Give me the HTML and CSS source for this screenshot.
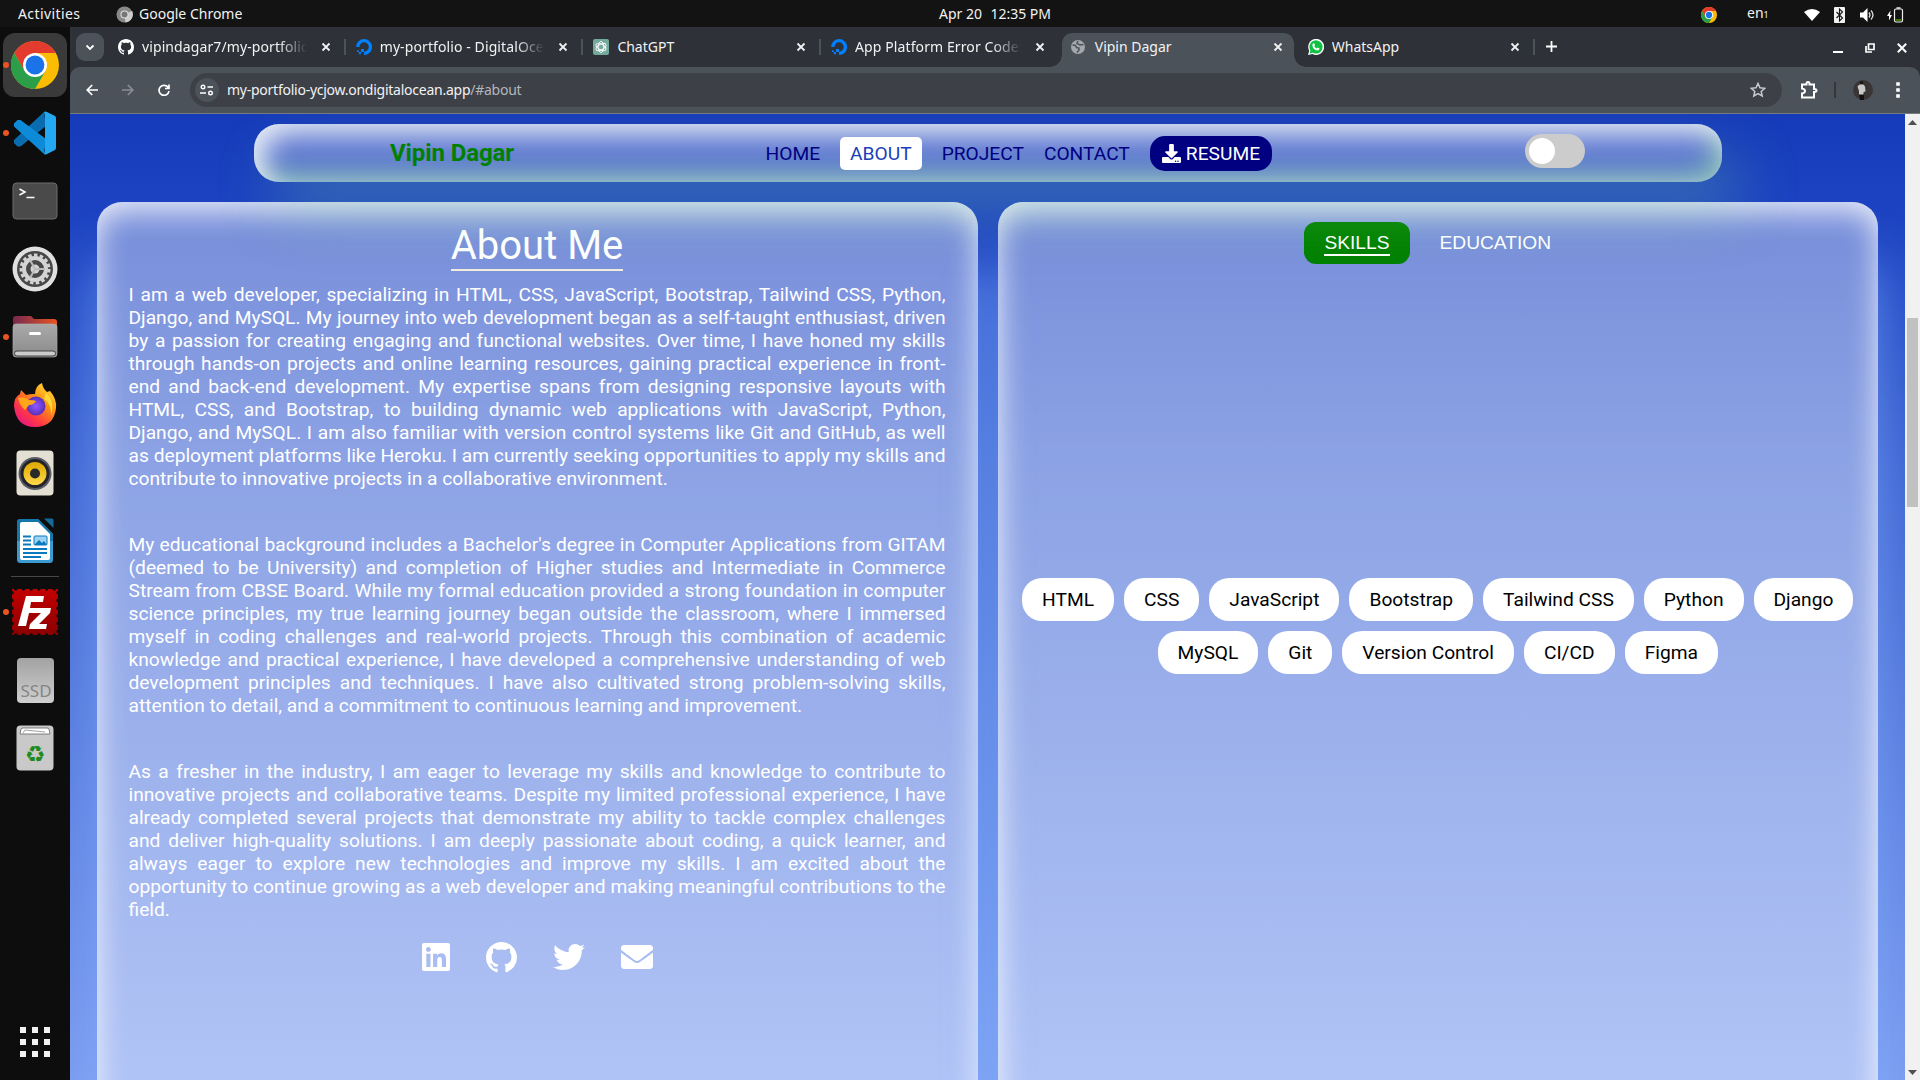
FILE: index.html
```html
<!DOCTYPE html>
<html lang="en">
<head>
<meta charset="utf-8">
<title>Vipin Dagar</title>
<link rel="stylesheet" href="styles.css">
</head>
<body>
<svg class="defs" width="0" height="0">
  <defs>
    <linearGradient id="files" x1="0" x2="1"><stop offset="0" stop-color="#77284f"/><stop offset="1" stop-color="#e95420"/></linearGradient>
    <linearGradient id="greyDown" x1="0" x2="0" y1="0" y2="1"><stop offset="0" stop-color="#a9a9a9"/><stop offset="1" stop-color="#8a8a8a"/></linearGradient>
    <linearGradient id="fox" x1="1" x2="0.2" y1="0" y2="1"><stop offset="0" stop-color="#fff44f"/><stop offset=".4" stop-color="#ff980e"/><stop offset=".75" stop-color="#ff3647"/><stop offset="1" stop-color="#e31587"/></linearGradient>
    <radialGradient id="globe"><stop offset="0" stop-color="#9059ff"/><stop offset="1" stop-color="#5b2fb8"/></radialGradient>
    <linearGradient id="fz" x1="0" x2="0" y1="0" y2="1"><stop offset="0" stop-color="#c40000"/><stop offset="1" stop-color="#8b0000"/></linearGradient>
    <linearGradient id="cone" x1="0" x2="0" y1="0" y2="1"><stop offset="0" stop-color="#e0a800"/><stop offset="1" stop-color="#ffd94a"/></linearGradient>
    <symbol id="chrome" viewBox="0 0 48 48">
      <circle cx="24" cy="24" r="24" fill="#fbbc04"/>
      <path d="M3.200 12A24 24 0 0 1 44.800 12H24v12z" fill="#e33b2e"/>
      <path d="M3.200 12 13.600 30 24 24V12z" fill="#e33b2e"/>
      <path d="M3.200 12A24 24 0 0 0 24 48L34.400 30 13.600 30z" fill="#2a9e48"/>
      <circle cx="24" cy="24" r="12" fill="#fff"/><circle cx="24" cy="24" r="9.400" fill="#1a73e8"/>
    </symbol>
    <symbol id="github" viewBox="0 0 16 16"><path d="M8 0C3.58 0 0 3.58 0 8c0 3.54 2.29 6.53 5.47 7.59.4.07.55-.17.55-.38 0-.19-.01-.82-.01-1.49-2.01.37-2.53-.49-2.69-.94-.09-.23-.48-.94-.82-1.13-.28-.15-.68-.52-.01-.53.63-.01 1.08.58 1.23.82.72 1.21 1.87.87 2.33.66.07-.52.28-.87.51-1.07-1.78-.2-3.64-.89-3.64-3.95 0-.87.31-1.59.82-2.15-.08-.2-.36-1.02.08-2.12 0 0 .67-.21 2.2.82.64-.18 1.32-.27 2-.27.68 0 1.36.09 2 .27 1.53-1.04 2.2-.82 2.2-.82.44 1.1.16 1.92.08 2.12.51.56.82 1.27.82 2.15 0 3.07-1.87 3.75-3.65 3.95.29.25.54.73.54 1.48 0 1.07-.01 1.93-.01 2.2 0 .21.15.46.55.38A8.013 8.013 0 0016 8c0-4.42-3.58-8-8-8z" fill="#fff"/></symbol>
    <symbol id="ocean" viewBox="0 0 16 16"><path d="M8 14.3A6.3 6.3 0 1 0 1.8 8" fill="none" stroke="#0080ff" stroke-width="3.3"/><path d="M5 10h3v3H5zM2.8 13H5v2.2H2.8zM1 11.2h1.8V13H1z" fill="#0080ff"/></symbol>
    <symbol id="close" viewBox="0 0 10 10"><path d="M1.5 1.5l7 7M8.5 1.5l-7 7" stroke="#f1f1f1" stroke-width="1.8"/></symbol>
  </defs>
</svg>

<header class="topbar">
  <div class="topbar-left"><span class="activities">Activities</span>
    <svg class="app-icon" viewBox="0 0 18 18"><circle cx="9" cy="9" r="8.5" fill="#888"/><path d="M9 9l8-4a8.5 8.5 0 0 1-7 12.4z" fill="#ccc"/><circle cx="9" cy="9" r="4.3" fill="#ddd"/><circle cx="9" cy="9" r="3.2" fill="#777"/></svg>
    <span class="app-name">Google Chrome</span></div>
  <div class="clock"><span>Apr 20</span><span>12:35 PM</span></div>
  <div class="tray">
    <svg class="t-chrome"><use href="#chrome"/></svg>
    <span class="lang">en<small>1</small></span>
    <svg class="t-wifi" viewBox="0 0 16 12"><path d="M0 3Q8-3 16 3L8 12z" fill="#fff"/></svg>
    <svg class="t-bt" viewBox="0 0 11 16"><rect width="11" height="16" rx="1" fill="#f2f2f2"/><path d="M2.5 5l6 6-3 3V2l3 3-6 6" fill="none" stroke="#131313" stroke-width="1.1"/></svg>
    <svg class="t-vol" viewBox="0 0 16 14"><path d="M0 4.5h3L7.500 0v14L3 9.500H0z" fill="#fff"/><path d="M9 4.500q2 2.500 0 5M11 2.500q4 4.500 0 9" fill="none" stroke="#ddd" stroke-width="1.300"/></svg>
    <svg class="t-bat" viewBox="0 0 17 16"><path d="M3.500 3.500L0 9h2v4.500L5 8H3z" fill="#fff"/><rect x="7.500" y="2" width="8" height="13" rx="1.500" fill="none" stroke="#eee" stroke-width="1.200"/><path d="M9.500 1h4" stroke="#eee" stroke-width="1.500"/><path d="M8.500 13h6" stroke="#4e9a06" stroke-width="1.500"/></svg>
  </div>
</header>

<div class="desktop">
  <aside class="dock">
    <div class="dock-item running focused"><svg width="48" height="48"><use href="#chrome"/></svg></div>
    <div class="dock-item running"><svg width="44" height="44" viewBox="0 0 44 44"><path d="M31 1 1 29l0 3 3.500 3.500h3L33 15z" fill="#0a6cb0"/><path d="M31 43 1 15.500v-3L4.500 9h3L33 28z" fill="#0d8bd8"/><path d="M31 1q1-1 3 0l8 4q1 1 1 2v30q0 1-1 2l-8 4q-2 1-3 0l1-4V5z" fill="#24a8f2"/></svg></div>
    <div class="dock-item"><svg width="46" height="38" viewBox="0 0 46 38"><rect x="1" y="1" width="44" height="36" rx="3.500" fill="#4a4a4a" stroke="#6c6c6c"/><path d="M7.500 7l5.500 3-5.500 3M14.500 15.500h8" fill="none" stroke="#fff" stroke-width="1.500"/></svg></div>
    <div class="dock-item"><svg width="46" height="46" viewBox="0 0 46 46"><circle cx="23" cy="23" r="22.500" fill="#e0e0e0"/><circle cx="23" cy="23" r="18" fill="#484848"/><circle cx="23" cy="23" r="14" fill="none" stroke="#d4d4d4" stroke-width="3" stroke-dasharray="3.500 2.363"/><circle cx="23" cy="23" r="11" fill="none" stroke="#d4d4d4" stroke-width="4"/><circle cx="23" cy="23" r="4.500" fill="#d4d4d4"/><path d="M23 23h10M23 23l-5-9M23 23l-5 9" stroke="#bbb" stroke-width="2"/></svg></div>
    <div class="dock-item running"><svg width="46" height="44" viewBox="0 0 46 44"><path d="M1 20V4q0-3 3-3h15l3 3h20q3 0 3 3v14z" fill="url(#files)"/><rect x="1" y="9" width="44" height="33" rx="3" fill="url(#greyDown)" stroke="#aaa" stroke-width=".7"/><rect x="2.500" y="36" width="41" height="5" rx="2.500" fill="#ccc" stroke="#444"/><rect x="17" y="17" width="12" height="3" rx="1.500" fill="#fff"/></svg></div>
    <div class="dock-item"><svg width="44" height="46" viewBox="0 0 44 46"><path d="M1 24q0-9 6-12l1-4 5 5q3-1 9-1Q22 4 29 1q1 6 5 9l3-1q7 8 6 17-2 19-21 19T1 24z" fill="url(#fox)"/><circle cx="23" cy="24" r="9.500" fill="url(#globe)"/><path d="M5 16q7-2 11 2 5 0 7 1-2 4-7 4l-4 5q-5-4-7-12z" fill="#ffa51a"/><path d="M33 11q9 8 5 23 1-12-7-17z" fill="#ffd83a"/></svg></div>
    <div class="dock-item"><svg width="38" height="46" viewBox="0 0 38 46"><rect x=".5" y=".5" width="37" height="45" rx="4" fill="#e4dfd3"/><circle cx="19" cy="23.500" r="16.500" fill="#5a5c66"/><circle cx="19" cy="23.500" r="14.500" fill="#22232b"/><circle cx="19" cy="23.500" r="11.500" fill="url(#cone)"/><circle cx="19" cy="23.500" r="5" fill="#2a2a2a"/></svg></div>
    <div class="dock-item"><svg width="38" height="46" viewBox="0 0 38 46"><path d="M4.500 1H22l15 15v25.500q0 3.500-3.500 3.500h-29Q1 45 1 41.500v-37Q1 1 4.500 1z" fill="#3a9bd0"/><path d="M1 23V4.500Q1 1 4.500 1H22l15 15v7z" fill="#1477ac"/><path d="M6 4h16l12 12v24q0 2-2 2H6q-2 0-2-2V6q0-2 2-2z" fill="#fff"/><path d="M28 .5h8q1.500 0 1.500 1.500v8z" fill="#136a9b"/><path d="M7 18.500h8M7 22.500h8M7 26.500h8M7 31h24M7 35h24M7 39h18" stroke="#0a7abf" stroke-width="2"/><rect x="18" y="18" width="13" height="9" rx="1" fill="#9fd3f2" stroke="#0a7abf"/><path d="M18 27l5-5 3 3 2-2 3 4z" fill="#0a7abf"/></svg></div>
    <hr class="dock-sep">
    <div class="dock-item running"><svg width="48" height="48" viewBox="0 0 48 48"><rect x="1" y="1" width="46" height="46" fill="url(#fz)"/><rect x="1" y="1" width="46" height="46" fill="none" stroke="#0d0d0d" stroke-width="3.500" stroke-dasharray="0 7.667" stroke-linecap="round" stroke-dashoffset="-3.800"/><path d="M15 8h18l-1 6H20l-1 6h21l-1 5-11 11h8l-1 5H18l1-5 11-11H18l-3 13H7z" fill="#fff"/></svg></div>
    <div class="dock-item"><div class="ssd">SSD</div></div>
    <div class="dock-item"><svg width="38" height="46" viewBox="0 0 38 46"><rect x=".5" y=".5" width="37" height="45" rx="4" fill="#c9c9c9"/><path d="M4 9l1-5q1-1 2-1h24q1 0 2 1l1 5z" fill="#fff" stroke="#666" stroke-width=".8"/><path d="M7 8l2-3 20 2" fill="none" stroke="#888" stroke-width=".8"/><text x="19" y="37" text-anchor="middle" class="recycle">♻</text></svg></div>
    <svg class="apps" width="30" height="30" viewBox="0 0 30 30"><path d="M0 0h6v6H0zM12 0h6v6h-6zM24 0h6v6h-6zM0 12h6v6H0zM12 12h6v6h-6zM24 12h6v6h-6zM0 24h6v6H0zM12 24h6v6h-6zM24 24h6v6h-6z" fill="#f2f2f2"/></svg>
  </aside>

  <main class="browser">
    <div class="tabstrip">
      <div class="tab-search"><svg width="10" height="7" viewBox="0 0 10 7"><path d="M1.500 1.500L5 5l3.500-3.500" fill="none" stroke="#fff" stroke-width="1.800"/></svg></div>
      <div class="tab"><svg class="fav"><use href="#github"/></svg><span class="title fade">vipindagar7/my-portfolio</span><svg class="x"><use href="#close"/></svg></div>
      <div class="tab"><svg class="fav"><use href="#ocean"/></svg><span class="title fade">my-portfolio - DigitalOcean</span><svg class="x"><use href="#close"/></svg></div>
      <div class="tab"><svg class="fav" viewBox="0 0 16 16"><rect width="16" height="16" rx="2" fill="#74aa9c"/><g fill="none" stroke="#fff" stroke-width=".9"><ellipse cx="8" cy="8" rx="2.800" ry="5.500"/><ellipse cx="8" cy="8" rx="2.800" ry="5.500" transform="rotate(60 8 8)"/><ellipse cx="8" cy="8" rx="2.800" ry="5.500" transform="rotate(120 8 8)"/></g></svg><span class="title">ChatGPT</span><svg class="x"><use href="#close"/></svg></div>
      <div class="tab before-active"><svg class="fav"><use href="#ocean"/></svg><span class="title fade">App Platform Error Codes</span><svg class="x"><use href="#close"/></svg></div>
      <div class="tab active"><svg class="fav" viewBox="0 0 16 16"><circle cx="8" cy="8" r="7" fill="#a3a8ae"/><path d="M2.500 6l3 .5 1 2 2.500.5v2l-2 2.500M8 2l-1 2.500 3 1.500 3.500-.5" fill="none" stroke="#4b525a" stroke-width="1.500"/></svg><span class="title">Vipin Dagar</span><svg class="x"><use href="#close"/></svg></div>
      <div class="tab"><svg class="fav" viewBox="0 0 16 16"><path d="M0 16l1.200-4.200A8 8 0 1 1 4.500 15z" fill="#fff"/><path d="M1.600 14.500l.8-3A6.600 6.600 0 1 1 4.700 13.700z" fill="#12c143"/><path d="M5 4.500l1.200-.2.8 2-.7.9q.8 1.600 2.400 2.300l.9-.9 2 1q-.2 2-2.200 2-4.700-1-5-5.400 0-1 .6-1.700z" fill="#fff"/></svg><span class="title">WhatsApp</span><svg class="x"><use href="#close"/></svg></div>
      <svg class="newtab" viewBox="0 0 11 11"><path d="M5.500 0v11M0 5.500h11" stroke="#fff" stroke-width="1.800"/></svg>
      <div class="win">
        <svg width="10" height="12" viewBox="0 0 10 12"><path d="M0 10h10" stroke="#fff" stroke-width="2"/></svg>
        <svg width="10" height="10" viewBox="0 0 10 10"><path d="M3.500 1h5.500v5.500H3.500zM1 3v6h6" fill="none" stroke="#fff" stroke-width="1.700"/></svg>
        <svg width="10" height="10" viewBox="0 0 10 10"><path d="M.8.8l8.400 8.400M9.200.8L.8 9.200" stroke="#fff" stroke-width="2"/></svg>
      </div>
    </div>
    <div class="toolbar">
      <svg class="tb" viewBox="0 0 12 12"><path d="M12 6H1.200M6.200 1L1.200 6l5 5" fill="none" stroke="#fff" stroke-width="1.700"/></svg>
      <svg class="tb" viewBox="0 0 12 12"><path d="M0 6h10.800M5.800 1l5 5-5 5" fill="none" stroke="#898e94" stroke-width="1.700"/></svg>
      <svg class="tb" viewBox="0 0 12 12"><path d="M10.300 3.700A5 5 0 1 0 11 7M11 .5v4H7" fill="none" stroke="#fff" stroke-width="1.700"/></svg>
      <div class="omnibox">
        <span class="site"><svg width="14" height="12" viewBox="0 0 14 12"><path d="M7.500 3H13M0 9h6" stroke="#fff" stroke-width="1.600"/><circle cx="3" cy="3" r="1.800" fill="none" stroke="#fff" stroke-width="1.400"/><circle cx="10.500" cy="9" r="1.800" fill="none" stroke="#fff" stroke-width="1.400"/></svg></span>
        <span class="url">my-portfolio-ycjow.ondigitalocean.app<i>/#about</i></span>
        <svg class="star" width="16" height="16" viewBox="0 0 16 16"><path d="M8 1.500l2 4.300 4.700.5-3.500 3.100 1 4.600L8 11.600 3.800 14l1-4.600L1.300 6.300 6 5.800z" fill="none" stroke="#c8cacd" stroke-width="1.500"/></svg>
      </div>
      <svg width="18" height="18" viewBox="0 0 18 18"><path d="M2 3.500h4.500q-.2-2.500 1.500-2.500t1.500 2.500H14V8q2.500-.2 2.500 1.500T14 11v5.500H2v-4q3-.4 3-2.500T2 7.500z" fill="none" stroke="#fff" stroke-width="2"/></svg>
      <i class="tb-sep"></i>
      <svg class="avatar" viewBox="0 0 20 20"><circle cx="10" cy="10" r="10" fill="#3b3635"/><path d="M4.500 6.500Q6 4 8.500 4t3.500 2.500l.5 5-2 .5v3H6v-4z" fill="#c9c9ca"/><circle cx="8.500" cy="2.800" r="1.800" fill="#1c1614"/><path d="M6 14.500h5V20H7z" fill="#111"/></svg>
      <svg width="4" height="18" viewBox="0 0 4 18"><path d="M.2 1.200h3.600v3.600H.2zM.2 7.200h3.600v3.600H.2zM.2 13.200h3.600v3.600H.2z" fill="#fff"/></svg>
    </div>

    <div class="viewport">
      <div class="page">
        <nav class="navbar">
          <a class="brand">Vipin Dagar</a>
          <div class="links"><a>HOME</a><a class="current">ABOUT</a><a>PROJECT</a><a>CONTACT</a>
            <a class="resume"><svg width="19" height="19" viewBox="0 0 512 512"><path fill="#fff" d="M216 0h80c13.300 0 24 10.700 24 24v168h87.700c17.800 0 26.700 21.500 14.100 34.100L269.700 378.300c-7.500 7.500-19.800 7.500-27.300 0L90.100 226.100c-12.600-12.600-3.700-34.100 14.100-34.100H192V24c0-13.300 10.700-24 24-24zm296 376v112c0 13.300-10.700 24-24 24H24c-13.300 0-24-10.700-24-24V376c0-13.300 10.700-24 24-24h146.700l49 49c20.100 20.100 52.500 20.100 72.600 0l49-49H488c13.300 0 24 10.700 24 24zm-124 88c0-11-9-20-20-20s-20 9-20 20 9 20 20 20 20-9 20-20zm64 0c0-11-9-20-20-20s-20 9-20 20 9 20 20 20 20-9 20-20z"/></svg>RESUME</a></div>
          <div class="switch"><span></span></div>
        </nav>
        <div class="columns">
          <section class="card about">
            <h1>About Me</h1>
            <p>I am a web developer, specializing in HTML, CSS, JavaScript, Bootstrap, Tailwind CSS, Python, Django, and MySQL. My journey into web development began as a self-taught enthusiast, driven by a passion for creating engaging and functional websites. Over time, I have honed my skills through hands-on projects and online learning resources, gaining practical experience in front-end and back-end development. My expertise spans from designing responsive layouts with HTML, CSS, and Bootstrap, to building dynamic web applications with JavaScript, Python, Django, and MySQL. I am also familiar with version control systems like Git and GitHub, as well as deployment platforms like Heroku. I am currently seeking opportunities to apply my skills and contribute to innovative projects in a collaborative environment.</p>
            <p>My educational background includes a Bachelor's degree in Computer Applications from GITAM (deemed to be University) and completion of Higher studies and Intermediate in Commerce Stream from CBSE Board. While my formal education provided a strong foundation in computer science principles, my true learning journey began outside the classroom, where I immersed myself in coding challenges and real-world projects. Through this combination of academic knowledge and practical experience, I have developed a comprehensive understanding of web development principles and techniques. I have also cultivated strong problem-solving skills, attention to detail, and a commitment to continuous learning and improvement.</p>
            <p>As a fresher in the industry, I am eager to leverage my skills and knowledge to contribute to innovative projects and collaborative teams. Despite my limited professional experience, I have already completed several projects that demonstrate my ability to tackle complex challenges and deliver high-quality solutions. I am deeply passionate about coding, a quick learner, and always eager to explore new technologies and improve my skills. I am excited about the opportunity to continue growing as a web developer and making meaningful contributions to the field.</p>
            <div class="social">
              <svg width="28" height="32" viewBox="0 0 448 512"><path fill="#fff" d="M416 32H31.900C14.300 32 0 46.500 0 64.300v383.400C0 465.500 14.300 480 31.900 480H416c17.600 0 32-14.500 32-32.300V64.300c0-17.800-14.400-32.300-32-32.300zM135.400 416H69V202.200h66.500V416zm-33.200-243c-21.300 0-38.500-17.300-38.500-38.500S80.900 96 102.200 96c21.200 0 38.500 17.300 38.500 38.500 0 21.300-17.200 38.500-38.500 38.500zm282.100 243h-66.400V312c0-24.800-.5-56.700-34.500-56.700-34.600 0-39.900 27-39.900 54.900V416h-66.400V202.200h63.700v29.200h.9c8.900-16.800 30.600-34.500 62.900-34.500 67.200 0 79.700 44.300 79.700 101.900V416z"/></svg>
              <svg width="31" height="31"><use href="#github"/></svg>
              <svg width="32" height="32" viewBox="0 0 512 512"><path fill="#fff" d="M459.370 151.716c.325 4.548.325 9.097.325 13.645 0 138.720-105.583 298.558-298.558 298.558-59.452 0-114.680-17.219-161.137-47.106 8.447.974 16.568 1.299 25.340 1.299 49.055 0 94.213-16.568 130.274-44.832-46.132-.975-84.792-31.188-98.112-72.772 6.498.974 12.995 1.624 19.818 1.624 9.421 0 18.843-1.300 27.614-3.573-48.081-9.747-84.143-51.980-84.143-102.985v-1.299c13.969 7.797 30.214 12.670 47.431 13.319-28.264-18.843-46.781-51.005-46.781-87.391 0-19.492 5.197-37.360 14.294-52.954 51.655 63.675 129.300 105.258 216.365 109.807-1.624-7.797-2.599-15.918-2.599-24.040 0-57.828 46.782-104.934 104.934-104.934 30.213 0 57.502 12.670 76.670 33.137 23.715-4.548 46.456-13.320 66.599-25.340-7.798 24.366-24.366 44.833-46.132 57.827 21.117-2.273 41.584-8.122 60.426-16.243-14.292 20.791-32.161 39.308-52.628 54.253z"/></svg>
              <svg width="32" height="32" viewBox="0 0 512 512"><path fill="#fff" d="M502.300 190.800c3.900-3.100 9.700-.2 9.700 4.700V400c0 26.500-21.500 48-48 48H48c-26.500 0-48-21.500-48-48V195.600c0-5 5.700-7.800 9.700-4.700 22.400 17.400 52.100 39.500 154.100 113.600 21.100 15.400 56.700 47.800 92.200 47.600 35.700.3 72-32.800 92.300-47.600 102-74.100 131.600-96.300 154-113.700zM256 320c23.200.4 56.600-29.200 73.400-41.400 132.700-96.300 142.800-104.700 173.400-128.700 5.800-4.500 9.200-11.500 9.200-18.900v-19c0-26.500-21.500-48-48-48H48c-26.500 0-48 21.500-48 48v19c0 7.400 3.400 14.300 9.200 18.900 30.600 23.900 40.700 32.400 173.400 128.700 16.800 12.200 50.200 41.800 73.400 41.400z"/></svg>
            </div>
          </section>
          <section class="card skills">
            <div class="switcher"><button class="on"><span>SKILLS</span></button><button>EDUCATION</button></div>
            <div class="chips"><span>HTML</span><span>CSS</span><span>JavaScript</span><span>Bootstrap</span><span>Tailwind CSS</span><span>Python</span><span>Django</span><span>MySQL</span><span>Git</span><span>Version Control</span><span>CI/CD</span><span>Figma</span></div>
          </section>
        </div>
      </div>
      <div class="scrollbar">
        <svg width="9" height="5" viewBox="0 0 9 5"><path d="M0 5l4.500-5L9 5z" fill="#505050"/></svg>
        <div class="thumb"></div>
        <svg width="9" height="5" viewBox="0 0 9 5"><path d="M0 0l4.500 5L9 0z" fill="#505050"/></svg>
      </div>
    </div>
  </main>
</div>
</body>
</html>
```
FILE: styles.css
```css
* { box-sizing: border-box; }
body { margin: 0; width: 1920px; height: 1080px; overflow: hidden; background: #0d0d0d; font-family: "Noto Sans", "Open Sans", sans-serif; font-size: 14px; color: #f2f2f2; }
svg { display: block; flex: none; }
.defs { position: absolute; }

/* system bar */
.topbar { height: 27px; background: #131313; display: grid; grid-template-columns: 939px 112px 1fr; align-items: center; line-height: 25px; }
.topbar span { padding-bottom: 2px; }
.topbar-left { display: flex; align-items: center; padding-left: 18px; white-space: nowrap; }
.activities { width: 98px; letter-spacing: .4px; }
.app-icon { width: 17px; height: 17px; margin-right: 6px; }
.clock { display: flex; justify-content: space-between; white-space: nowrap; }
.tray { display: flex; align-items: center; justify-content: flex-end; padding-right: 16px; }
.t-chrome { width: 16px; height: 16px; margin-right: 30px; }
.lang { width: 57px; }
.lang small { font-size: 9px; }
.t-wifi { width: 16px; height: 12px; margin-right: 14px; }
.t-bt { width: 11px; height: 16px; margin-right: 15px; }
.t-vol { width: 16px; height: 14px; margin-right: 11px; }
.t-bat { width: 17px; height: 16px; }

.desktop { display: flex; height: 1053px; }

/* dock */
.dock { width: 70px; background: #0d0d0d; padding: 6px 3px 23px; display: flex; flex-direction: column; align-items: center; gap: 4px; }
.dock-item { position: relative; width: 64px; height: 64px; display: flex; align-items: center; justify-content: center; border-radius: 12px; }
.dock-item.focused { background: #3a3a3a; }
.dock-item.running::before { content: ""; position: absolute; left: 0; top: 29px; width: 6px; height: 6px; border-radius: 50%; background: #e95420; }
.dock-sep { width: 48px; height: 1px; border: 0; margin: -1px 0 -1px; background: #484848; }
.ssd { width: 37px; height: 45px; border-radius: 4px; background: linear-gradient(#a2a2a2, #cfcfcf); color: #858585; font: 17px/15px "Noto Sans", sans-serif; padding: 25px 0 0 4px; }
.recycle { font: 23px "DejaVu Sans", sans-serif; fill: #1f8b1f; }
.apps { margin-top: auto; }

/* browser frame */
.browser { flex: 1; display: flex; flex-direction: column; background: #2e3138; }
.tabstrip { height: 40px; display: flex; align-items: flex-start; padding: 6px 13px 0 6px; }
.tab-search { width: 28px; height: 28px; border-radius: 9px; background: #4b525a; display: flex; align-items: center; justify-content: center; margin-right: 4px; }
.tab { position: relative; width: 237.700px; height: 34px; padding: 0 15px 6px 10px; display: flex; align-items: center; }
.tab::after { content: ""; position: absolute; right: 0; top: 6px; width: 2px; height: 16px; background: #4b525a; }
.tab.before-active::after, .tab.active::after { display: none; }
.tab.before-active { padding-right: 14px; }
.tab.active { width: 232px; background: #4b525a; border-radius: 10px 10px 0 0; margin: 0 4px 0 3px; padding-left: 8px; padding-right: 11px; }
.tab.active::before { content: ""; position: absolute; left: -12px; right: -12px; bottom: 0; height: 12px; background: radial-gradient(circle at 0 0, transparent 11.500px, #4b525a 12px) left / 12px 12px no-repeat, radial-gradient(circle at 100% 0, transparent 11.500px, #4b525a 12px) right / 12px 12px no-repeat; }
.fav { width: 16px; height: 16px; margin-right: 8px; }
.title { flex: 1; overflow: hidden; white-space: nowrap; margin-right: 12px; padding-bottom: 2px; }
.active .title { padding-left: 1px; }
.fade { letter-spacing: .1px; -webkit-mask-image: linear-gradient(90deg, #000 82%, transparent 99%); mask-image: linear-gradient(90deg, #000 82%, transparent 99%); }
.x { width: 10px; height: 10px; }
.newtab { width: 11px; height: 11px; margin: 8px 0 0 11px; }
.win { margin-left: auto; display: flex; gap: 22px; padding-top: 9px; align-items: center; }
.toolbar { height: 47px; background: #4b525a; border-bottom: 1px solid #777b80; border-radius: 10px 10px 0 0; display: flex; align-items: center; padding: 0 20px 0 16px; }
.tb { width: 12px; height: 12px; margin-right: 24px; }
.tb:nth-child(3) { margin-right: 20px; }
.omnibox { width: 1592px; height: 34px; border-radius: 17px; background: #3d4047; display: flex; align-items: center; padding: 0 16px 0 5px; margin-right: 18px; }
.site { width: 24px; height: 24px; border-radius: 50%; background: #4b525a; display: flex; align-items: center; justify-content: center; }
.url { flex: 1; margin-left: 8px; padding-bottom: 2px; letter-spacing: -.25px; }
.url i { font-style: normal; color: #b4b7ba; }
.tb-sep { width: 2px; height: 16px; background: #33373c; margin: 0 17px 0 16px; }
.avatar { width: 20px; height: 20px; margin-right: auto; }

/* page */
.viewport { flex: 1; min-height: 0; display: flex; }
.page { flex: 1; overflow: hidden; padding: 10px 27px 0; background: linear-gradient(#163bba 0, #1d43c2 10%, #3f64d2 35%, #7c9cf0 100%); font-family: Roboto, sans-serif; font-size: 19.200px; }
.navbar { position: relative; z-index: 2; width: 1468px; height: 58px; margin: 0 auto 20px 157px; padding: 0 137px 0 136px; border-radius: 25px; display: flex; align-items: center; background: rgba(255, 255, 255, .3); box-shadow: 20px 30px 60px rgba(144, 238, 144, .25), inset 10px 10px 28px rgba(255, 255, 255, .85), inset -10px -10px 26px rgba(144, 238, 144, .45); color: navy; }
.brand { width: 366px; color: green; font-size: 24px; font-weight: 700; letter-spacing: -.1px; padding-bottom: 1px; }
.links { display: flex; align-items: center; height: 35px; margin-left: -.500px; }
.links a { padding: 0 10px; line-height: 33px; white-space: nowrap; }
.links .current { margin: 0 10px; background: #fff; color: #1a3fb8; border-radius: 5px; }
.links .resume { display: flex; align-items: center; gap: 5px; height: 35px; margin-left: 10px; padding: 0 12px; border-radius: 15px; background: navy; color: #fff; }
.switch { margin-left: auto; width: 60px; height: 34px; margin-bottom: 4px; padding: 4px; border-radius: 17px; background: #ccc; }
.switch span { display: block; width: 26px; height: 26px; border-radius: 50%; background: #fff; }
.columns { display: grid; grid-template-columns: 1fr 1fr; gap: 20px; height: 1000px; }
.card { border-radius: 25px; background: rgba(255, 255, 255, .4); box-shadow: 0 60px 50px rgba(130, 180, 255, .55), inset 0 9px 30px rgba(255, 255, 255, .85); }
.about { padding: 19px 32px 0 31.500px; text-align: center; }
.about h1 { display: inline-block; margin: 0 0 12px; font-size: 40px; font-weight: 400; line-height: 50px; height: 50px; border-bottom: 2px solid #f3ecdb; vertical-align: top; color: #fff; }
.about p { margin: 0 0 43px; line-height: 23px; text-align: justify; color: #fff; }
.about p:last-of-type { margin-bottom: 20px; }
.social { display: flex; justify-content: center; align-items: center; gap: 36px; }
.skills { display: flex; flex-direction: column; align-items: center; padding-top: 20px; }
.switcher { display: flex; gap: 10px; margin-bottom: 314px; }
.switcher button { height: 42px; padding: 0 20px; border: 0; border-radius: 12px; background: none; font: 19.200px "Liberation Sans", Arial, sans-serif; color: #fff; }
.switcher .on { background: green; }
.on span { display: block; height: 25px; line-height: 23px; margin-top: 1px; border-bottom: 2px solid #fff; }
.chips { display: flex; flex-wrap: wrap; justify-content: center; gap: 10px; width: 850px; color: #000; }
.chips span { height: 43px; line-height: 43px; padding: 0 20px; border-radius: 20px; background: #fff; }

.scrollbar { width: 15px; background: #f1f1f1; display: flex; flex-direction: column; align-items: center; justify-content: space-between; padding: 6px 0 5px; }
.thumb { width: 11px; height: 189px; margin: 193px 0 auto; background: #c1c1c1; }
```
